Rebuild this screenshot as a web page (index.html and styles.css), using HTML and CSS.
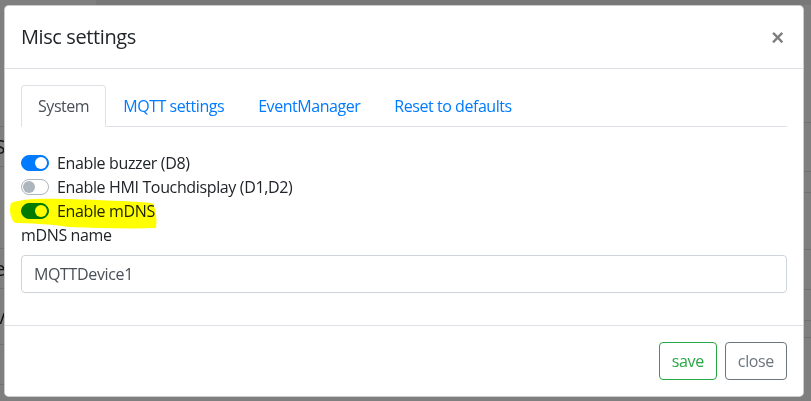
FILE: index.html
```html
<!DOCTYPE html>
<html lang="en">
<head>
<meta charset="utf-8">
<title>Misc settings</title>
<link rel="stylesheet" href="styles.css">
</head>
<body>
<div class="page">
  <div class="topbar"><div class="topbar-light"></div></div>
  <div class="bg-cols">
    <div class="bg-left">
      <div class="bgrow h1"></div>
      <div class="bgrow h2"><span class="bgtxt">S</span></div>
      <div class="bgrow h3"></div>
      <div class="bgrow h4"><span class="bgtxt">e</span></div>
      <div class="bgrow h5"><span class="bgtxt">v</span></div>
      <div class="bgrow h6"></div>
    </div>
    <div class="bg-right">
      <div class="rrow r1"></div>
      <div class="rrow r2"></div>
      <div class="rrow r3"></div>
      <div class="rrow r4"></div>
      <div class="rrow r5"></div>
      <div class="rrow r6"></div>
      <div class="rrow r7"></div>
    </div>
  </div>
</div>
<div class="backdrop"></div>

<div class="modal">
  <div class="modal-header">
    <h5 class="modal-title">Misc settings</h5>
    <button class="close" type="button">&times;</button>
  </div>
  <div class="modal-body">
    <ul class="nav-tabs">
      <li><a class="nav-link active">System</a></li>
      <li><a class="nav-link">MQTT settings</a></li>
      <li><a class="nav-link">EventManager</a></li>
      <li><a class="nav-link">Reset to defaults</a></li>
    </ul>
    <div class="tab-content">
      <div class="switch on"><span class="track"><span class="knob"></span></span><span class="switch-label">Enable buzzer (D8)</span></div>
      <div class="switch"><span class="track"><span class="knob"></span></span><span class="switch-label">Enable HMI Touchdisplay (D1,D2)</span></div>
      <div class="switch on"><span class="track"><span class="knob"></span></span><span class="switch-label">Enable mDNS</span></div>
      <div class="form-group">
        <label class="field-label">mDNS name</label>
        <input class="form-control" type="text" value="MQTTDevice1">
      </div>
    </div>
    <svg class="highlight" width="150" height="36" viewBox="0 0 150 36">
      <path d="M2 6 C 10 2, 30 1, 60 2 C 90 3, 120 4, 143 6 C 147 10, 148 22, 147 31 C 120 32, 90 31, 60 30 C 40 27, 20 26, 6 26 C 1 22, 0 12, 2 6 Z" fill="#ffff00"/>
    </svg>
  </div>
  <div class="modal-footer">
    <button class="btn btn-save" type="button">save</button>
    <button class="btn btn-close" type="button">close</button>
  </div>
</div>
</body>
</html>
```
FILE: styles.css
```css
* { box-sizing: border-box; }

html, body {
  margin: 0;
  padding: 0;
  width: 811px;
  height: 401px;
  overflow: hidden;
}

body {
  font-family: "Open Sans", "Noto Sans", "Liberation Sans", sans-serif;
  font-size: 16px;
  line-height: 24px;
  letter-spacing: -0.36px;
  color: #212529;
  background: #ffffff;
  position: relative;
}

/* background page (behind the backdrop) */
.page {
  height: 401px;
}

.topbar {
  height: 5px;
  background: #f0f0f0;
}

.topbar-light {
  width: 96px;
  height: 5px;
  background: #ffffff;
}

.bg-cols {
  display: flex;
  justify-content: space-between;
}

.bg-left {
  width: 6px;
}

.bg-right {
  width: 10px;
}

.bgrow {
  border-bottom: 1px solid #dee2e6;
  display: flex;
  justify-content: flex-end;
  align-items: center;
  white-space: nowrap;
  font-size: 20px;
}

.bgtxt {
  color: #212529;
  margin-right: 1px;
}

.bgrow.h1 { height: 122px; }
.bgrow.h2 { height: 40px; }
.bgrow.h3 { height: 82px; }
.bgrow.h4 { height: 40px; }
.bgrow.h5 { height: 56px; }
.bgrow.h6 { height: 40px; }

.rrow { border-bottom: 1px solid #dee2e6; }
.rrow.r1 { height: 118px; }
.rrow.r2 { height: 49px; }
.rrow.r3 { height: 21px; }
.rrow.r4 { height: 57px; }
.rrow.r5 { height: 40px; }
.rrow.r6 { height: 31px; }
.rrow.r7 { height: 17px; }

.backdrop {
  position: absolute;
  inset: 0;
  background: rgba(0, 0, 0, 0.5);
}

/* modal */
.modal {
  position: absolute;
  left: 4px;
  top: 5px;
  width: 800px;
  background: #ffffff;
  border: 1px solid rgba(0, 0, 0, 0.2);
  border-radius: 4.8px;
}

.modal-header {
  display: flex;
  align-items: flex-start;
  justify-content: space-between;
  padding: 16px;
  border-bottom: 1px solid #dee2e6;
}

.modal-title {
  margin: 0;
  font-size: 20px;
  line-height: 30px;
  font-weight: 400;
  letter-spacing: -0.4px;
  color: #212529;
}

.close {
  font-family: "Liberation Sans", sans-serif;
  background: transparent;
  border: 0;
  padding: 21px 19px 12px 16px;
  margin: -16px -16px -16px auto;
  font-size: 22px;
  font-weight: 700;
  line-height: 1;
  color: #000000;
  opacity: 0.5;
}

.modal-body {
  position: relative;
  padding: 16px;
}

.nav-tabs {
  display: flex;
  list-style: none;
  margin: 0;
  padding: 0;
  border-bottom: 1px solid #dee2e6;
}

.nav-tabs li {
  margin-bottom: -1px;
}

.nav-link {
  display: block;
  padding: 8px 16px;
  border: 1px solid transparent;
  border-top-left-radius: 4px;
  border-top-right-radius: 4px;
  color: #007bff;
  line-height: 24px;
  letter-spacing: -0.45px;
}

.nav-link.active {
  color: #495057;
  background: #ffffff;
  border-color: #dee2e6 #dee2e6 #ffffff;
}

.tab-content {
  padding-top: 24px;
}

.switch {
  display: flex;
  align-items: flex-start;
  min-height: 24px;
}

.track {
  display: flex;
  align-items: center;
  width: 28px;
  height: 16px;
  margin-top: 4px;
  margin-right: 8px;
  padding: 0 1px;
  border: 1px solid #adb5bd;
  border-radius: 8px;
  background: #ffffff;
}

.knob {
  width: 12px;
  height: 12px;
  border-radius: 50%;
  background: #adb5bd;
}

.switch.on .track {
  justify-content: flex-end;
  background: #007bff;
  border-color: #007bff;
}

.switch.on .knob {
  background: #ffffff;
}

.form-group {
  margin-bottom: 16px;
}

.field-label {
  display: inline-block;
  margin-bottom: 8px;
}

.form-control {
  display: block;
  width: 100%;
  height: 38px;
  padding: 6px 12px;
  font-family: inherit;
  font-size: 16px;
  line-height: 24px;
  letter-spacing: -0.36px;
  color: #495057;
  background: #ffffff;
  border: 1px solid #ced4da;
  border-radius: 4px;
}

.highlight {
  position: absolute;
  left: 4px;
  top: 128px;
  mix-blend-mode: multiply;
  pointer-events: none;
}

.modal-footer {
  display: flex;
  justify-content: flex-end;
  gap: 8px;
  padding: 16px;
  border-top: 1px solid #dee2e6;
}

.btn {
  font-family: inherit;
  font-size: 16px;
  line-height: 24px;
  letter-spacing: -0.36px;
  padding: 6px 12px;
  background: transparent;
  border: 1px solid;
  border-radius: 4px;
}

.btn-save {
  color: #28a745;
  border-color: #28a745;
}

.btn-close {
  color: #6c757d;
  border-color: #6c757d;
}
```
